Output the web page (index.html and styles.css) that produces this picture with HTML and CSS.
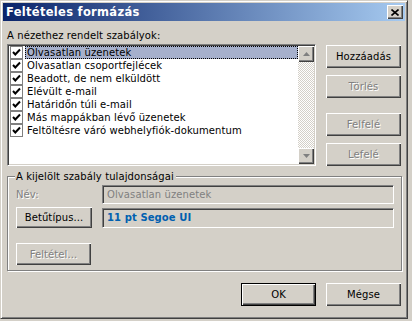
FILE: index.html
```html
<!DOCTYPE html>
<html lang="hu">
<head>
    <meta charset="UTF-8">
    <title>Feltételes formázás</title>
    <link rel="stylesheet" href="styles.css">
</head>
<body>
<div class="window">
    <div class="titlebar">
        <span class="title">Feltételes formázás</span>
        <button class="close" aria-label="Bezárás">
            <svg width="8" height="7" viewBox="0 0 8 7"><path d="M0.5 0.5 L7.5 6.5 M7.5 0.5 L0.5 6.5" stroke="#000" stroke-width="1.6" fill="none"/></svg>
        </button>
    </div>

    <div class="content">
        <div class="caption">A nézethez rendelt szabályok:</div>

        <div class="main-row">
            <div class="listbox">
                <ul class="rules">
                    <li class="rule selected"><span class="check"></span><span class="name">Olvasatlan üzenetek</span></li>
                    <li class="rule"><span class="check"></span><span class="name">Olvasatlan csoportfejlécek</span></li>
                    <li class="rule"><span class="check"></span><span class="name">Beadott, de nem elküldött</span></li>
                    <li class="rule"><span class="check"></span><span class="name">Elévült e-mail</span></li>
                    <li class="rule"><span class="check"></span><span class="name">Határidőn túli e-mail</span></li>
                    <li class="rule"><span class="check"></span><span class="name">Más mappákban lévő üzenetek</span></li>
                    <li class="rule"><span class="check"></span><span class="name">Feltöltésre váró webhelyfiók-dokumentum</span></li>
                </ul>
                <div class="scrollbar">
                    <div class="arrow up"><svg width="7" height="4" viewBox="0 0 7 4"><path d="M3.5 0 L7 4 L0 4 Z" fill="#808080"/></svg></div>
                    <div class="track"></div>
                    <div class="arrow down"><svg width="7" height="4" viewBox="0 0 7 4"><path d="M0 0 L7 0 L3.5 4 Z" fill="#808080"/></svg></div>
                </div>
            </div>

            <div class="side-buttons">
                <button class="btn">Hozzáadás</button>
                <button class="btn" disabled>Törlés</button>
                <button class="btn move" disabled>Felfelé</button>
                <button class="btn" disabled>Lefelé</button>
            </div>
        </div>

        <fieldset class="group">
            <legend>A kijelölt szabály tulajdonságai</legend>
            <div class="props">
                <span class="prop-label disabled">Név:</span>
                <div class="field muted">Olvasatlan üzenetek</div>
                <button class="btn">Betűtípus...</button>
                <div class="field font-value">11 pt Segoe UI</div>
                <button class="btn" disabled>Feltétel...</button>
            </div>
        </fieldset>

        <div class="footer">
            <button class="btn default">OK</button>
            <button class="btn">Mégse</button>
        </div>
    </div>
</div>
</body>
</html>
```

FILE: styles.css
```css
:root {
    --face: #d4d0c8;
    --shadow: #808080;
    --dark: #404040;
    --light: #ffffff;
    --select: #a6b0cc;
    --font: 'DejaVu Sans', Verdana, sans-serif;
}
html, body {
    margin: 0;
    padding: 0;
    background: var(--face);
}
body {
    font-family: var(--font);
    font-size: 10px;
    letter-spacing: 0.1px;
    color: #000;
}
.window {
    width: 408px;
    height: 319px;
    box-sizing: border-box;
    border: 1px solid;
    border-color: var(--face) var(--dark) var(--dark) var(--face);
    box-shadow: inset 1px 1px var(--light), inset -1px -1px var(--shadow);
    padding: 2px;
    display: flex;
    flex-direction: column;
    background: var(--face);
}
.titlebar {
    height: 18px;
    flex: none;
    display: flex;
    align-items: center;
    justify-content: space-between;
    padding: 0 2px 0 3px;
    background: linear-gradient(to right, #0a246a, #a6caf0);
}
.title {
    color: #fff;
    font-weight: bold;
    font-size: 11.5px;
    letter-spacing: 0.3px;
}
.close {
    width: 16px;
    height: 14px;
    padding: 0;
    border: 0;
    background: var(--face);
    box-shadow: inset 1px 1px var(--light), inset -1px -1px var(--dark), inset -2px -2px var(--shadow);
    display: flex;
    align-items: center;
    justify-content: center;
}
.content {
    padding: 0 4px;
    flex: 1;
    display: flex;
    flex-direction: column;
}
.caption {
    margin-top: 8px;
    line-height: 13px;
}
.main-row {
    margin-top: 2px;
    display: flex;
    gap: 10px;
}
.listbox {
    width: 311px;
    height: 122px;
    box-sizing: border-box;
    border: 1px solid;
    border-color: var(--shadow) var(--light) var(--light) var(--shadow);
    box-shadow: inset 1px 1px var(--dark), inset -1px -1px var(--face);
    padding: 1px;
    display: flex;
}
.rules {
    list-style: none;
    margin: 0;
    padding: 0;
    flex: 1;
    background: #fff;
}
.rule {
    height: 13px;
    display: flex;
    align-items: center;
}
.check {
    width: 11px;
    height: 11px;
    margin-left: 1px;
    border: 1px solid var(--shadow);
    background: #fff url("data:image/svg+xml,%3Csvg xmlns='http://www.w3.org/2000/svg' width='11' height='11' viewBox='0 0 11 11'%3E%3Cpath d='M2 5 L4.3 7.5 L9 2.5' stroke='%23000' stroke-width='2' fill='none'/%3E%3C/svg%3E") no-repeat center;
    flex: none;
}
.name {
    flex: 1;
    margin-left: 2px;
    padding-left: 2px;
    line-height: 13px;
    white-space: nowrap;
}
.rule.selected .name {
    background: var(--select);
    outline: 1px dotted #000;
    outline-offset: -1px;
}
.scrollbar {
    width: 16px;
    display: flex;
    flex-direction: column;
    flex: none;
}
.arrow {
    height: 16px;
    background: var(--face);
    box-shadow: inset 1px 1px var(--light), inset -1px -1px var(--dark), inset -2px -2px var(--shadow);
    display: flex;
    align-items: center;
    justify-content: center;
}
.track {
    flex: 1;
    background: repeating-conic-gradient(#fff 0 25%, var(--face) 0 50%) 0 0 / 2px 2px;
}
.side-buttons {
    display: flex;
    flex-direction: column;
    gap: 7px;
    margin-top: 1px;
}
.side-buttons .move {
    margin-top: 8px;
}
.btn {
    width: 75px;
    height: 23px;
    padding: 0;
    border: 0;
    background: var(--face);
    box-shadow: inset 1px 1px var(--light), inset -1px -1px var(--dark), inset -2px -2px var(--shadow);
    font-family: var(--font);
    font-size: 10px;
    letter-spacing: 0.1px;
    color: #000;
}
.btn:disabled, .disabled {
    color: var(--shadow);
    text-shadow: 1px 1px #fff;
}
.btn.default {
    border: 1px solid #000;
}
.group {
    margin: 4px 0 0;
    padding: 2px 7px 6px 8px;
    border: 1px solid var(--shadow);
    box-shadow: inset 1px 1px var(--light), 1px 1px var(--light);
    height: 101px;
    box-sizing: border-box;
    width: 395px;
}
.group legend {
    padding: 0 2px 0 1px;
    margin-left: -1px;
    line-height: 13px;
    background: var(--face);
}
.props {
    display: grid;
    grid-template-columns: 76px 1fr;
    column-gap: 10px;
    row-gap: 3px;
    align-items: center;
}
.props .btn {
    width: 76px;
    height: 21px;
}
.props .btn:disabled {
    margin-top: 12px;
    width: 75px;
    height: 22px;
}
.field {
    height: 20px;
    box-sizing: border-box;
    border: 1px solid;
    border-color: var(--shadow) var(--light) var(--light) var(--shadow);
    box-shadow: inset 1px 1px var(--dark), inset -1px -1px var(--face);
    padding: 0 4px;
    line-height: 18px;
    white-space: nowrap;
}
.field.muted {
    color: var(--shadow);
    height: 19px;
    line-height: 17px;
}
.font-value {
    color: #0060b0;
    font-weight: bold;
}
.footer {
    margin-top: 12px;
    display: flex;
    justify-content: flex-end;
    gap: 10px;
}
```
